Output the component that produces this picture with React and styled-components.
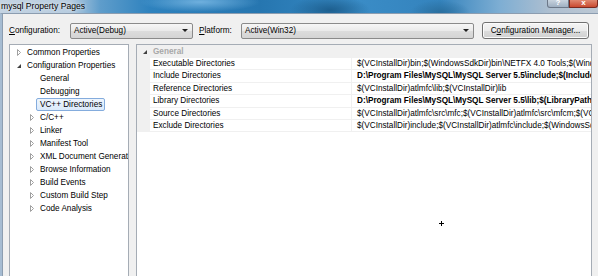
import React from "react";
import styled, { createGlobalStyle } from "styled-components";

const GlobalStyle = createGlobalStyle`
  html, body { margin: 0; padding: 0; background: #f0f0f0; }
  body { font-family: "Liberation Sans", Arial, sans-serif; }
`;

const tree = [
  { label: "Common Properties", level: 0, arrow: "closed" },
  { label: "Configuration Properties", level: 0, arrow: "open" },
  { label: "General", level: 1 },
  { label: "Debugging", level: 1 },
  { label: "VC++ Directories", level: 1, selected: true },
  { label: "C/C++", level: 1, arrow: "closed" },
  { label: "Linker", level: 1, arrow: "closed" },
  { label: "Manifest Tool", level: 1, arrow: "closed" },
  { label: "XML Document Generator", level: 1, arrow: "closed" },
  { label: "Browse Information", level: 1, arrow: "closed" },
  { label: "Build Events", level: 1, arrow: "closed" },
  { label: "Custom Build Step", level: 1, arrow: "closed" },
  { label: "Code Analysis", level: 1, arrow: "closed" },
];

const props = [
  {
    name: "Executable Directories",
    value:
      "$(VCInstallDir)bin;$(WindowsSdkDir)bin\\NETFX 4.0 Tools;$(WindowsSdkDir)bin;$(VSInstallDir)Common7\\Tools\\bin",
  },
  {
    name: "Include Directories",
    value: "D:\\Program Files\\MySQL\\MySQL Server 5.5\\include;$(IncludePath)",
    bold: true,
  },
  { name: "Reference Directories", value: "$(VCInstallDir)atlmfc\\lib;$(VCInstallDir)lib" },
  {
    name: "Library Directories",
    value: "D:\\Program Files\\MySQL\\MySQL Server 5.5\\lib;$(LibraryPath)",
    bold: true,
  },
  {
    name: "Source Directories",
    value:
      "$(VCInstallDir)atlmfc\\src\\mfc;$(VCInstallDir)atlmfc\\src\\mfcm;$(VCInstallDir)atlmfc\\src\\atl",
  },
  {
    name: "Exclude Directories",
    value:
      "$(VCInstallDir)include;$(VCInstallDir)atlmfc\\include;$(WindowsSdkDir)include;$(FrameworkSDKDir)include",
  },
];

function Twisty({ kind }) {
  if (kind === "open") {
    return (
      <TwistyBox>
        <svg width="6" height="6" viewBox="0 0 6 6">
          <polygon points="5,1 5,5 1,5" fill="#404040" />
        </svg>
      </TwistyBox>
    );
  }
  if (kind === "closed") {
    return (
      <TwistyBox>
        <svg width="6" height="7" viewBox="0 0 6 7">
          <polygon points="1.5,0.5 4.5,3.5 1.5,6.5" fill="none" stroke="#a0a0a0" strokeWidth="1" />
        </svg>
      </TwistyBox>
    );
  }
  return <TwistyBox />;
}

export default function App() {
  return (
    <Page>
      <GlobalStyle />
      <TitleBar>
        <TitleText>mysql Property Pages</TitleText>
        <CaptionButtons>
          <CaptionBtn>?</CaptionBtn>
          <CaptionBtn close>x</CaptionBtn>
        </CaptionButtons>
      </TitleBar>
      <Body>
        <ConfigRow>
          <Label width={61}>
            <u>C</u>onfiguration:
          </Label>
          <Combo width={123}>
            <span>Active(Debug)</span>
            <Arrow />
          </Combo>
          <Label width={42} style={{ marginLeft: 6 }}>
            <u>P</u>latform:
          </Label>
          <Combo width={233}>
            <span>Active(Win32)</span>
            <Arrow />
          </Combo>
          <Button>
            C<u>o</u>nfiguration Manager...
          </Button>
        </ConfigRow>
        <Panels>
          <TreePanel>
            {tree.map((t) => (
              <TreeRow key={t.label} level={t.level}>
                <Twisty kind={t.arrow} />
                <TreeLabel selected={t.selected}>{t.label}</TreeLabel>
              </TreeRow>
            ))}
          </TreePanel>
          <GridPanel>
            <CategoryRow>
              <GutterTwisty>
                <svg width="6" height="6" viewBox="0 0 6 6">
                  <polygon points="5,1 5,5 1,5" fill="#404040" />
                </svg>
              </GutterTwisty>
              <CategoryText>General</CategoryText>
            </CategoryRow>
            {props.map((p) => (
              <PropRow key={p.name}>
                <Gutter />
                <NameCell>{p.name}</NameCell>
                <ValueCell bold={p.bold}>{p.value}</ValueCell>
              </PropRow>
            ))}
            <Cursor />
          </GridPanel>
        </Panels>
      </Body>
    </Page>
  );
}

const Page = styled.div`
  width: 598px;
  height: 276px;
  overflow: hidden;
  display: flex;
  flex-direction: column;
  font-size: 8.2px;
  color: #000;
`;

const TitleBar = styled.div`
  height: 13px;
  flex: none;
  display: flex;
  align-items: flex-start;
  justify-content: space-between;
  background:
    radial-gradient(ellipse 40px 14px at 330px 10px, #1d5f8f 0, rgba(29, 95, 143, 0) 100%),
    radial-gradient(ellipse 30px 12px at 440px 12px, #2a6f9f 0, rgba(42, 111, 159, 0) 100%),
    radial-gradient(ellipse 60px 10px at 200px 2px, #6fb0de 0, rgba(111, 176, 222, 0) 100%),
    linear-gradient(
      90deg,
      #c4d3e2 0,
      #b8cde0 70px,
      #5f9dcb 100px,
      #2e82be 150px,
      #2676b0 260px,
      #3a8cc6 360px,
      #3483bd 440px,
      #7eaed3 500px,
      #aebfd0 550px,
      #bcc8d4 598px
    );
`;

const TitleText = styled.div`
  padding-left: 1px;
  line-height: 12px;
  font-size: 8.6px;
  color: #000;
  text-shadow: 0 0 3px rgba(255, 255, 255, 0.9);
`;

const CaptionButtons = styled.div`
  display: flex;
`;

const CaptionBtn = styled.div`
  width: ${(p) => (p.close ? 27 : 20)}px;
  height: 7px;
  line-height: 5px;
  text-align: center;
  font-size: 8px;
  font-weight: bold;
  color: #fff;
  border: 1px solid ${(p) => (p.close ? "#7a2a20" : "#6c7888")};
  border-top: none;
  border-radius: ${(p) => (p.close ? "0 0 3px 0" : "0 0 0 3px")};
  background: ${(p) =>
    p.close
      ? "linear-gradient(#e08870, #c94a30)"
      : "linear-gradient(#c8d3de, #9fb0c2)"};
`;

const Body = styled.div`
  flex: 1;
  display: flex;
  flex-direction: column;
  border-left: 2px solid #a6bcd2;
  border-top: 1px solid #8c9db0;
  box-shadow: inset 1px 0 0 #8c9db0;
  padding: 8px 6px 0 7px;
  background: #f0f0f0;
`;

const ConfigRow = styled.div`
  display: flex;
  align-items: center;
  height: 17px;
`;

const Label = styled.div`
  width: ${(p) => p.width}px;
  flex: none;
  line-height: 17px;
`;

const Combo = styled.div`
  width: ${(p) => p.width}px;
  height: 16px;
  flex: none;
  box-sizing: border-box;
  display: flex;
  align-items: center;
  justify-content: space-between;
  padding: 0 4px 0 3px;
  border: 1px solid #8a8a8a;
  border-radius: 2px;
  background: linear-gradient(#f6f6f6, #e9e9e9 50%, #dcdcdc 51%, #d4d4d4);
`;

const Arrow = styled.span`
  width: 0;
  height: 0;
  border-left: 3px solid transparent;
  border-right: 3px solid transparent;
  border-top: 3px solid #202020;
`;

const Button = styled.div`
  margin-left: 8px;
  width: 107px;
  height: 17px;
  flex: none;
  box-sizing: border-box;
  display: flex;
  align-items: center;
  justify-content: center;
  border: 1px solid #707070;
  border-radius: 3px;
  box-shadow: inset 0 0 0 1px #fbfbfb;
  background: linear-gradient(#f4f4f4, #ebebeb 50%, #dddddd 51%, #d0d0d0);
`;

const Panels = styled.div`
  display: flex;
  gap: 7px;
  margin-top: 5px;
  height: 260px;
  flex: none;
`;

const TreePanel = styled.div`
  width: 120px;
  flex: none;
  box-sizing: border-box;
  border: 1px solid #a5acb5;
  background: #fff;
  padding-top: 1px;
  overflow: hidden;
`;

const TreeRow = styled.div`
  height: 13px;
  display: flex;
  align-items: center;
  padding-left: ${(p) => (p.level === 0 ? 6 : 19)}px;
  white-space: nowrap;
`;

const TwistyBox = styled.span`
  width: 9px;
  flex: none;
  display: flex;
  align-items: center;
  svg {
    display: block;
  }
`;

const TreeLabel = styled.span`
  line-height: 11px;
  padding: 0 2px 0 1px;
  margin-left: ${(p) => (p.selected ? -2 : 0)}px;
  padding-left: ${(p) => (p.selected ? 3 : 1)}px;
  border: 1px solid ${(p) => (p.selected ? "#84acdd" : "transparent")};
  border-radius: 2px;
  background: ${(p) => (p.selected ? "linear-gradient(#eef5fd, #dbeafb)" : "transparent")};
`;

const GridPanel = styled.div`
  position: relative;
  width: 456px;
  flex: none;
  box-sizing: border-box;
  border: 1px solid #a5acb5;
  background: #fff;
  overflow: hidden;
`;

const CategoryRow = styled.div`
  height: 13px;
  display: flex;
  align-items: center;
  background: #f0f0f0;
`;

const GutterTwisty = styled.span`
  width: 16px;
  flex: none;
  display: flex;
  justify-content: center;
  svg {
    display: block;
  }
`;

const CategoryText = styled.span`
  color: #a8a8a8;
  font-weight: bold;
`;

const PropRow = styled.div`
  height: 12.4px;
  box-sizing: border-box;
  display: flex;
  border-bottom: 1px solid #f0f0f0;
  white-space: nowrap;
`;

const Gutter = styled.div`
  width: 13px;
  flex: none;
  background: #f0f0f0;
`;

const NameCell = styled.div`
  width: 202px;
  flex: none;
  padding-left: 3px;
  box-sizing: border-box;
  line-height: 11.4px;
  border-right: 1px solid #f0f0f0;
`;

const ValueCell = styled.div`
  flex: 1;
  padding-left: 5px;
  line-height: 11.4px;
  overflow: hidden;
  font-weight: ${(p) => (p.bold ? "bold" : "normal")};
`;

const Cursor = styled.div`
  position: absolute;
  left: 302px;
  top: 176px;
  width: 5px;
  height: 5px;
  &::before,
  &::after {
    content: "";
    position: absolute;
    background: #000;
  }
  &::before {
    left: 2px;
    top: 0;
    width: 1px;
    height: 5px;
  }
  &::after {
    left: 0;
    top: 2px;
    width: 5px;
    height: 1px;
  }
`;
